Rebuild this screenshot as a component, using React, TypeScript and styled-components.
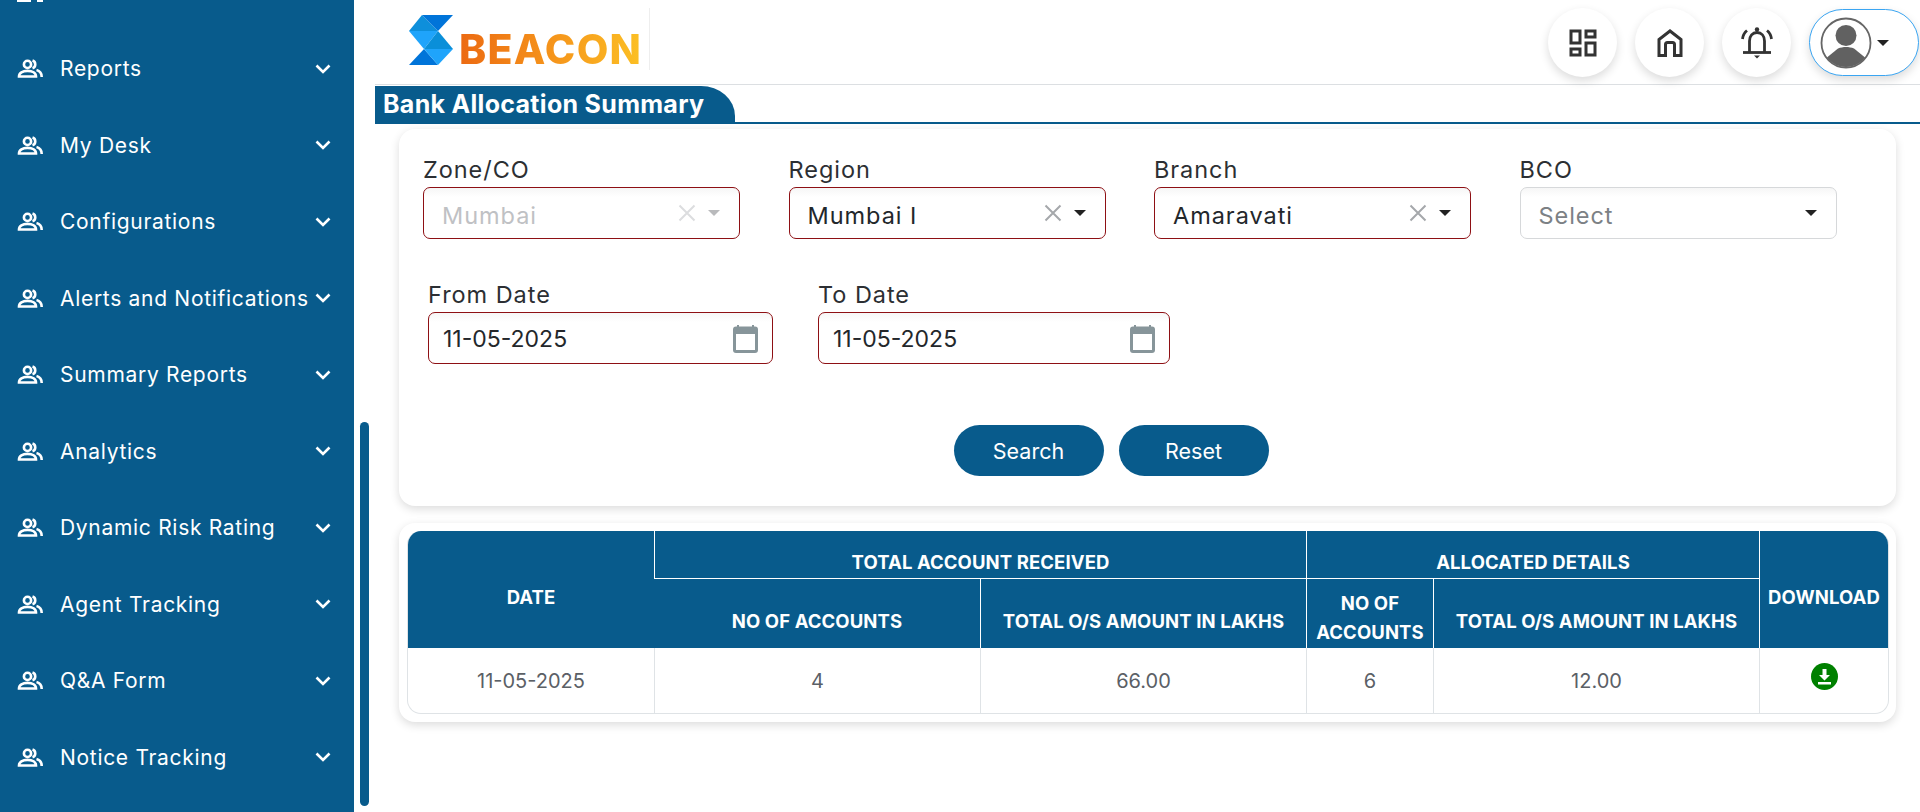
import React from 'react';
import styled, { createGlobalStyle } from 'styled-components';

const BLUE = '#085b8c';
const FONT = `Inter, 'Open Sans', sans-serif`;

const GlobalStyle = createGlobalStyle`
  html, body {
    margin: 0;
    height: 812px;
    overflow: hidden;
    background: #fff;
    font-family: ${FONT};
  }
  * { box-sizing: border-box; }
`;

const Page = styled.div`
  display: flex;
  width: 1920px;
  height: 812px;
  overflow: hidden;
`;

const Sidebar = styled.aside`
  width: 354px;
  height: 812px;
  background: ${BLUE};
  overflow: hidden;
  flex-shrink: 0;
`;

const NavList = styled.ul`
  list-style: none;
  margin: -46px 0 0;
  padding: 0;
`;

const NavItem = styled.li`
  display: flex;
  align-items: center;
  height: 76.5px;
  padding-left: 17px;
  color: #fff;
  font-size: 21px;
  letter-spacing: 0.7px;
`;

const NavLabel = styled.span`
  margin-left: 17px;
  width: 255px;
  white-space: nowrap;
`;

const Gutter = styled.div`
  width: 21px;
  flex-shrink: 0;
  padding: 422px 0 0 6px;
`;

const ScrollThumb = styled.div`
  width: 9px;
  height: 384px;
  border-radius: 5px;
  background: ${BLUE};
`;

const Main = styled.main`
  flex: 1;
  min-width: 0;
`;

const Header = styled.header`
  display: flex;
  align-items: flex-start;
  justify-content: space-between;
  height: 85px;
  border-bottom: 1.5px solid #dcdfe2;
  padding: 8px 1px 0 25px;
`;

const LogoWrap = styled.div`
  display: flex;
  align-items: flex-end;
  height: 62px;
  width: 250px;
  border-right: 1px solid #eee;
  svg {
    margin: 0 0 -2px 1px;
  }
`;

const LogoText = styled.span`
  margin-left: -2px;
  margin-bottom: -3px;
  font-size: 41px;
  line-height: 48px;
  font-weight: 800;
  letter-spacing: 1.3px;
  background: linear-gradient(90deg, #ec6a12 0%, #f6981c 55%, #fcc024 100%);
  -webkit-background-clip: text;
  background-clip: text;
  color: transparent;
`;

const HeaderActions = styled.div`
  display: flex;
  align-items: center;
  gap: 18px;
`;

const RoundButton = styled.button`
  display: flex;
  align-items: center;
  justify-content: center;
  width: 69px;
  height: 69px;
  padding: 0;
  border: none;
  border-radius: 50%;
  background: #fff;
  box-shadow: 0 4px 10px rgba(0, 0, 0, 0.14);
`;

const ProfileButton = styled.button`
  display: flex;
  align-items: center;
  width: 110px;
  height: 67px;
  padding: 0 0 0 10px;
  border: 1.5px solid #3aa5f2;
  border-radius: 34px;
  background: #fff;
  box-shadow: 0 4px 10px rgba(0, 0, 0, 0.14);
`;

const TitleBar = styled.div`
  display: flex;
  height: 39px;
  padding-top: 1px;
  border-bottom: 2px solid ${BLUE};
`;

const TitleTab = styled.h2`
  margin: 0;
  width: 360px;
  height: 37px;
  padding-left: 8px;
  background: ${BLUE};
  color: #fff;
  font-size: 25px;
  font-weight: 700;
  letter-spacing: 0.3px;
  line-height: 36px;
  white-space: nowrap;
  border-top-right-radius: 34px 30px;
`;

const Card = styled.section`
  margin: 5px 24px 0;
  background: #fff;
  border-radius: 16px;
  box-shadow: 0 3px 10px rgba(0, 0, 0, 0.14);
`;

const FilterCard = styled(Card)`
  height: 377px;
  padding: 23px 0 0 24px;
`;

const SelectRow = styled.div`
  display: grid;
  grid-template-columns: repeat(4, 317px);
  column-gap: 48.5px;
`;

const DateRow = styled.div`
  display: flex;
  gap: 45px;
  margin-top: 38px;
  padding-left: 5px;
`;

const Field = styled.div<{ $width?: number }>`
  width: ${(p) => (p.$width ? `${p.$width}px` : 'auto')};
`;

const Label = styled.label`
  display: block;
  height: 35px;
  padding-top: 3px;
  color: #2c2f33;
  font-size: 23.5px;
  letter-spacing: 0.95px;
  line-height: 30px;
`;

const Control = styled.div<{ $invalid?: boolean }>`
  display: flex;
  align-items: center;
  height: 52px;
  padding: 4px 8px 0 18px;
  border: 1.5px solid ${(p) => (p.$invalid ? '#8e1014' : '#d6d8da')};
  border-radius: 7px;
  background: linear-gradient(#f6f6f6 0, #fff 9px);
`;

const DateControl = styled(Control)`
  padding: 1px 14px 0 14px;
  justify-content: space-between;
`;

const ControlText = styled.span<{ $tone?: 'disabled' | 'muted' }>`
  flex: 1;
  font-size: 23.5px;
  letter-spacing: 0.95px;
  color: ${(p) =>
    p.$tone === 'disabled' ? '#bfc1c4' : p.$tone === 'muted' ? '#7c8185' : '#23272b'};
`;

const DateText = styled.span`
  font-size: 23px;
  color: #23272b;
`;

const Caret = styled.i<{ $disabled?: boolean }>`
  display: block;
  margin: -4px 11px 0 12px;
  width: 0;
  height: 0;
  border-left: 6px solid transparent;
  border-right: 6px solid transparent;
  border-top: 6px solid ${(p) => (p.$disabled ? '#b9babc' : '#222')};
`;

const ProfileCaret = styled(Caret)`
  margin: 0 0 0 5px;
`;

const ClearSvg = styled.svg`
  margin-top: -4px;
`;

const Buttons = styled.div`
  display: flex;
  justify-content: center;
  gap: 15px;
  margin-top: 61px;
  padding-right: 97px;
`;

const PrimaryButton = styled.button`
  width: 150px;
  height: 51px;
  border: none;
  border-radius: 26px;
  background: ${BLUE};
  color: #fff;
  font-family: ${FONT};
  font-size: 21.5px;
`;

const TableCard = styled(Card)`
  margin-top: 17px;
  padding: 8px;
`;

const Table = styled.table`
  width: 1480px;
  table-layout: fixed;
  border-collapse: separate;
  border-spacing: 0;
  border-radius: 14px;
  overflow: hidden;
  border: 1px solid #dfe3e6;
  border-top: none;
`;

const Th = styled.th<{ $pad?: number }>`
  background: ${BLUE};
  color: #fff;
  font-size: 18.5px;
  font-weight: 700;
  letter-spacing: 0.1px;
  line-height: 28.5px;
  padding: ${(p) => p.$pad ?? 0}px 0 0;
  border-left: 1px solid #fff;
  border-bottom: 1px solid #fff;
  text-align: center;
  &:first-child { border-left: none; }
`;

const HeadBottomTh = styled(Th)`
  border-bottom: none;
`;

const Td = styled.td`
  height: 65px;
  color: #5b6066;
  font-size: 20px;
  text-align: center;
  border-left: 1px solid #dfe3e6;
  &:first-child { border-left: none; }
`;

const DownloadCell = styled(Td)`
  vertical-align: top;
  padding-top: 15px;
`;

const menuItems = [
  'Reports',
  'My Desk',
  'Configurations',
  'Alerts and Notifications',
  'Summary Reports',
  'Analytics',
  'Dynamic Risk Rating',
  'Agent Tracking',
  'Q&A Form',
  'Notice Tracking',
];

function PeopleIcon(): JSX.Element {
  return (
    <svg width="26" height="19" viewBox="0 0 26 19" fill="none" stroke="#fff" strokeWidth="2.6">
      <circle cx="10.5" cy="5.4" r="3.6" />
      <path d="M2 17.500c0-3.600 3.600-5.600 8.500-5.600s8.500 2 8.500 5.600z" />
      <path d="M15.500 1.600a4 4 0 0 1 0 7.600M19.500 11c3 .8 5.200 3 5.200 7" />
    </svg>
  );
}

function NoteIcon(): JSX.Element {
  return (
    <svg width="26" height="19" viewBox="0 0 26 19" fill="#fff">
      <rect x="0" y="16" width="14" height="3" />
      <rect x="20" y="16" width="6" height="3" />
    </svg>
  );
}

function Chevron(): JSX.Element {
  return (
    <svg width="16" height="10" viewBox="0 0 16 10" fill="none" stroke="#fff" strokeWidth="2.6">
      <path d="M1.500 1.500L8 8l6.500-6.500" />
    </svg>
  );
}

function LogoMark(): JSX.Element {
  return (
    <svg width="60" height="64" viewBox="0 0 60 64">
      <polygon points="8,23 21,7 37,23" fill="#0e8fdb" />
      <polygon points="21,7 52,7 37,23" fill="#0074d9" />
      <polygon points="8,23 37,23 23,41" fill="#1fa4fb" />
      <polygon points="37,23 52,41 23,41" fill="#0a8fd9" />
      <polygon points="23,41 37,57 8,57" fill="#0074d9" />
      <polygon points="23,41 52,41 37,57" fill="#1fa4fb" />
    </svg>
  );
}

function DashboardIcon(): JSX.Element {
  return (
    <svg width="36" height="36" viewBox="0 0 24 24" fill="#333">
      <path d="M19 5v2h-4V5h4M9 5v6H5V5h4m10 8v6h-4v-6h4M9 17v2H5v-2h4M21 3h-8v6h8V3zM11 3H3v10h8V3zm10 8h-8v10h8V11zm-10 4H3v6h8v-6z" />
    </svg>
  );
}

function HomeIcon(): JSX.Element {
  return (
    <svg width="28" height="30" viewBox="0 0 28 30" fill="none" stroke="#333" strokeWidth="3">
      <path d="M3 27.500V11.500L14 3l11 8.500v16h-6.500V16.500a2 2 0 0 0-2-2h-5a2 2 0 0 0-2 2v11z" />
    </svg>
  );
}

function BellIcon(): JSX.Element {
  return (
    <svg width="34" height="34" viewBox="0 0 34 34" fill="none" stroke="#333" strokeWidth="2.8">
      <path d="M9.500 26V15c0-5 3-8.500 7.500-8.500s7.500 3.500 7.500 8.500v11" />
      <path d="M3 26.500h28" />
      <path d="M2.500 13c.5-4 2-6.500 4.500-8.500M31.500 13c-.5-4-2-6.500-4.500-8.500" />
      <path d="M14 29.500h6l-3 3z" fill="#333" stroke="none" />
      <circle cx="17" cy="3.500" r="2.200" fill="#333" stroke="none" />
    </svg>
  );
}

function AvatarIcon(): JSX.Element {
  return (
    <svg width="52" height="52" viewBox="0 0 52 52">
      <defs>
        <clipPath id="avatar-clip">
          <circle cx="26" cy="26" r="24" />
        </clipPath>
      </defs>
      <circle cx="26" cy="26" r="24.500" fill="#fff" stroke="#666" strokeWidth="1.800" />
      <circle cx="26" cy="18.500" r="10.500" fill="#616161" />
      <path d="M0 46L18 31.500c5-2 11-2 16 0L52 46v8H0z" fill="#616161" clipPath="url(#avatar-clip)" />
    </svg>
  );
}

function CalendarIcon(): JSX.Element {
  return (
    <svg width="25" height="28" viewBox="0 0 25 28">
      <path d="M4 0h2v4H4zM19 0h2v4h-2z" fill="#87959a" />
      <rect x="1.500" y="3" width="22" height="23.500" rx="1.500" fill="#fff" stroke="#87959a" strokeWidth="3" />
      <rect x="1" y="3" width="23" height="6" fill="#87959a" />
    </svg>
  );
}

function ClearIcon({ tone }: { tone: string }): JSX.Element {
  return (
    <ClearSvg width="18" height="18" viewBox="0 0 18 18" fill="none" stroke={tone} strokeWidth="2">
      <path d="M1.500 1.500l15 15M16.500 1.500l-15 15" />
    </ClearSvg>
  );
}

function DownloadIcon(): JSX.Element {
  return (
    <svg width="27" height="27" viewBox="0 0 27 27">
      <circle cx="13.500" cy="13.500" r="13.500" fill="#008000" />
      <path d="M11.500 6h4v6h3.500l-5.500 5.500L8 12h3.500z" fill="#fff" />
      <rect x="7" y="19" width="13" height="2.500" fill="#fff" />
    </svg>
  );
}

function App(): JSX.Element {
  return (
    <Page>
      <GlobalStyle />
      <Sidebar>
        <NavList>
          <NavItem>
            <NoteIcon />
          </NavItem>
          {menuItems.map((item) => (
            <NavItem key={item}>
              <PeopleIcon />
              <NavLabel>{item}</NavLabel>
              <Chevron />
            </NavItem>
          ))}
        </NavList>
      </Sidebar>
      <Gutter>
        <ScrollThumb />
      </Gutter>
      <Main>
        <Header>
          <LogoWrap>
            <LogoMark />
            <LogoText>BEACON</LogoText>
          </LogoWrap>
          <HeaderActions>
            <RoundButton>
              <DashboardIcon />
            </RoundButton>
            <RoundButton>
              <HomeIcon />
            </RoundButton>
            <RoundButton>
              <BellIcon />
            </RoundButton>
            <ProfileButton>
              <AvatarIcon />
              <ProfileCaret />
            </ProfileButton>
          </HeaderActions>
        </Header>
        <TitleBar>
          <TitleTab>Bank Allocation Summary</TitleTab>
        </TitleBar>
        <FilterCard>
          <SelectRow>
            <Field>
              <Label>Zone/CO</Label>
              <Control $invalid>
                <ControlText $tone="disabled">Mumbai</ControlText>
                <ClearIcon tone="#dcdddf" />
                <Caret $disabled />
              </Control>
            </Field>
            <Field>
              <Label>Region</Label>
              <Control $invalid>
                <ControlText>Mumbai I</ControlText>
                <ClearIcon tone="#a5a8ab" />
                <Caret />
              </Control>
            </Field>
            <Field>
              <Label>Branch</Label>
              <Control $invalid>
                <ControlText>Amaravati</ControlText>
                <ClearIcon tone="#a5a8ab" />
                <Caret />
              </Control>
            </Field>
            <Field>
              <Label>BCO</Label>
              <Control>
                <ControlText $tone="muted">Select</ControlText>
                <Caret />
              </Control>
            </Field>
          </SelectRow>
          <DateRow>
            <Field $width={345}>
              <Label>From Date</Label>
              <DateControl $invalid>
                <DateText>11-05-2025</DateText>
                <CalendarIcon />
              </DateControl>
            </Field>
            <Field $width={352}>
              <Label>To Date</Label>
              <DateControl $invalid>
                <DateText>11-05-2025</DateText>
                <CalendarIcon />
              </DateControl>
            </Field>
          </DateRow>
          <Buttons>
            <PrimaryButton>Search</PrimaryButton>
            <PrimaryButton>Reset</PrimaryButton>
          </Buttons>
        </FilterCard>
        <TableCard>
          <Table>
            <colgroup>
              <col style={{ width: 246 }} />
              <col style={{ width: 326 }} />
              <col style={{ width: 326 }} />
              <col style={{ width: 127 }} />
              <col style={{ width: 326 }} />
              <col style={{ width: 129 }} />
            </colgroup>
            <thead>
              <tr>
                <HeadBottomTh rowSpan={2} $pad={16}>
                  DATE
                </HeadBottomTh>
                <Th colSpan={2} $pad={16} style={{ height: 48 }}>
                  TOTAL ACCOUNT RECEIVED
                </Th>
                <Th colSpan={2} $pad={16}>
                  ALLOCATED DETAILS
                </Th>
                <HeadBottomTh rowSpan={2} $pad={16}>
                  DOWNLOAD
                </HeadBottomTh>
              </tr>
              <tr>
                <HeadBottomTh $pad={16} style={{ height: 69 }}>
                  NO OF ACCOUNTS
                </HeadBottomTh>
                <HeadBottomTh $pad={16}>TOTAL O/S AMOUNT IN LAKHS</HeadBottomTh>
                <HeadBottomTh $pad={8}>NO OF ACCOUNTS</HeadBottomTh>
                <HeadBottomTh $pad={16}>TOTAL O/S AMOUNT IN LAKHS</HeadBottomTh>
              </tr>
            </thead>
            <tbody>
              <tr>
                <Td>11-05-2025</Td>
                <Td>4</Td>
                <Td>66.00</Td>
                <Td>6</Td>
                <Td>12.00</Td>
                <DownloadCell>
                  <DownloadIcon />
                </DownloadCell>
              </tr>
            </tbody>
          </Table>
        </TableCard>
      </Main>
    </Page>
  );
}

export default App;
